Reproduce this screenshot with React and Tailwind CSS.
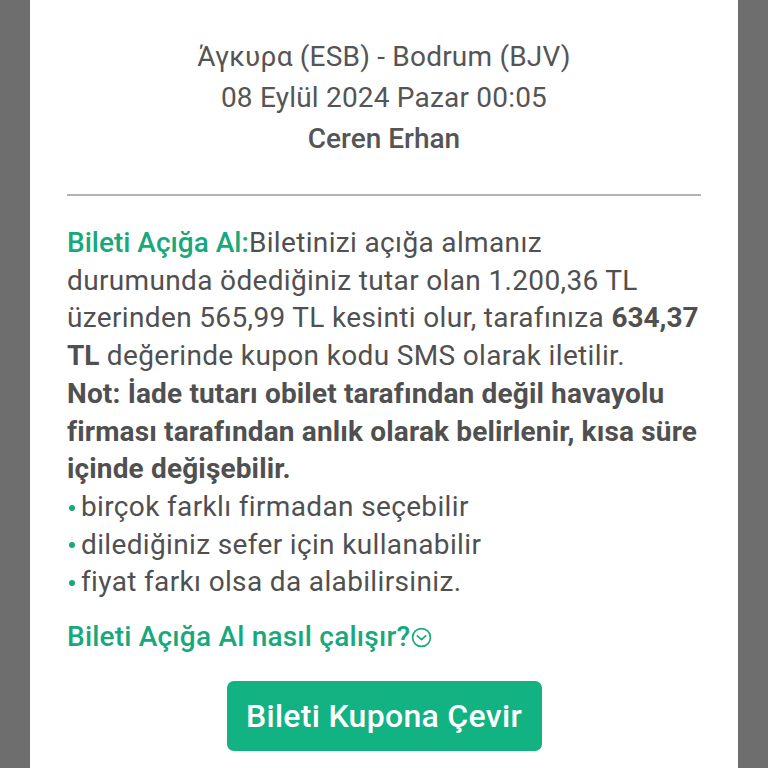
import React from 'react';

function App() {
  return (
    <div className="min-h-screen w-full bg-[#6e6e6e] flex justify-center" style={{ fontFamily: 'Roboto, "Noto Sans", sans-serif' }}>
      <div className="w-[708px] min-h-screen bg-white px-[37px] pt-[36px] pb-6">
        {/* Header */}
        <div className="flex flex-col items-center text-[#555555] text-[28px] leading-[41px] tracking-[0.2px]">
          <p>Άγκυρα (ESB) - Bodrum (BJV)</p>
          <p>08 Eylül 2024 Pazar 00:05</p>
          <p className="font-medium tracking-[0px]">Ceren Erhan</p>
        </div>

        <div className="mt-[35px] h-[2px] bg-[#b3b3b3]" />

        {/* Info */}
        <div className="mt-[28px] text-[28px] leading-[37.7px] text-[#505050] tracking-[0.35px]">
          <p>
            <span className="text-[#17a87b] font-medium tracking-[0px]">Bileti Açığa Al:</span>Biletinizi açığa almanız<br />
            durumunda ödediğiniz tutar olan 1.200,36 TL<br />
            üzerinden 565,99 TL kesinti olur, tarafınıza <span className="font-bold tracking-[0px]">634,37</span><br />
            <span className="font-bold tracking-[0px]">TL</span> değerinde kupon kodu SMS olarak iletilir.
          </p>
          <p className="font-bold tracking-[0.15px]">
            Not: İade tutarı obilet tarafından değil havayolu<br />
            firması tarafından anlık olarak belirlenir, kısa süre<br />
            içinde değişebilir.
          </p>
          <ul>
            {['birçok farklı firmadan seçebilir', 'dilediğiniz sefer için kullanabilir', 'fiyat farkı olsa da alabilirsiniz.'].map((t) => (
              <li key={t} className="flex items-center gap-[6px]">
                <span className="ml-[2px] w-[6px] h-[6px] rounded-full bg-[#17a87b] mt-[2px]" />
                {t}
              </li>
            ))}
          </ul>
        </div>

        <div className="mt-[17px] flex items-center text-[28px] leading-[38px] text-[#17a87b] font-medium tracking-[0.2px]">
          <span>Bileti Açığa Al nasıl çalışır?</span>
          <svg width="21" height="21" viewBox="0 0 20 20" fill="none" stroke="#17a87b" strokeWidth="1.6" className="ml-[1px]">
            <circle cx="10" cy="10" r="8.5" />
            <path d="M6 8.5l4 3.5 4-3.5" strokeLinecap="round" strokeLinejoin="round" />
          </svg>
        </div>

        <div className="mt-[25px] flex justify-center">
          <button className="w-[315px] h-[70px] rounded-[7px] bg-[#12b283] text-white text-[32px] font-medium tracking-[0.3px]">
            Bileti Kupona Çevir
          </button>
        </div>
      </div>
    </div>
  );
}

export default App;
